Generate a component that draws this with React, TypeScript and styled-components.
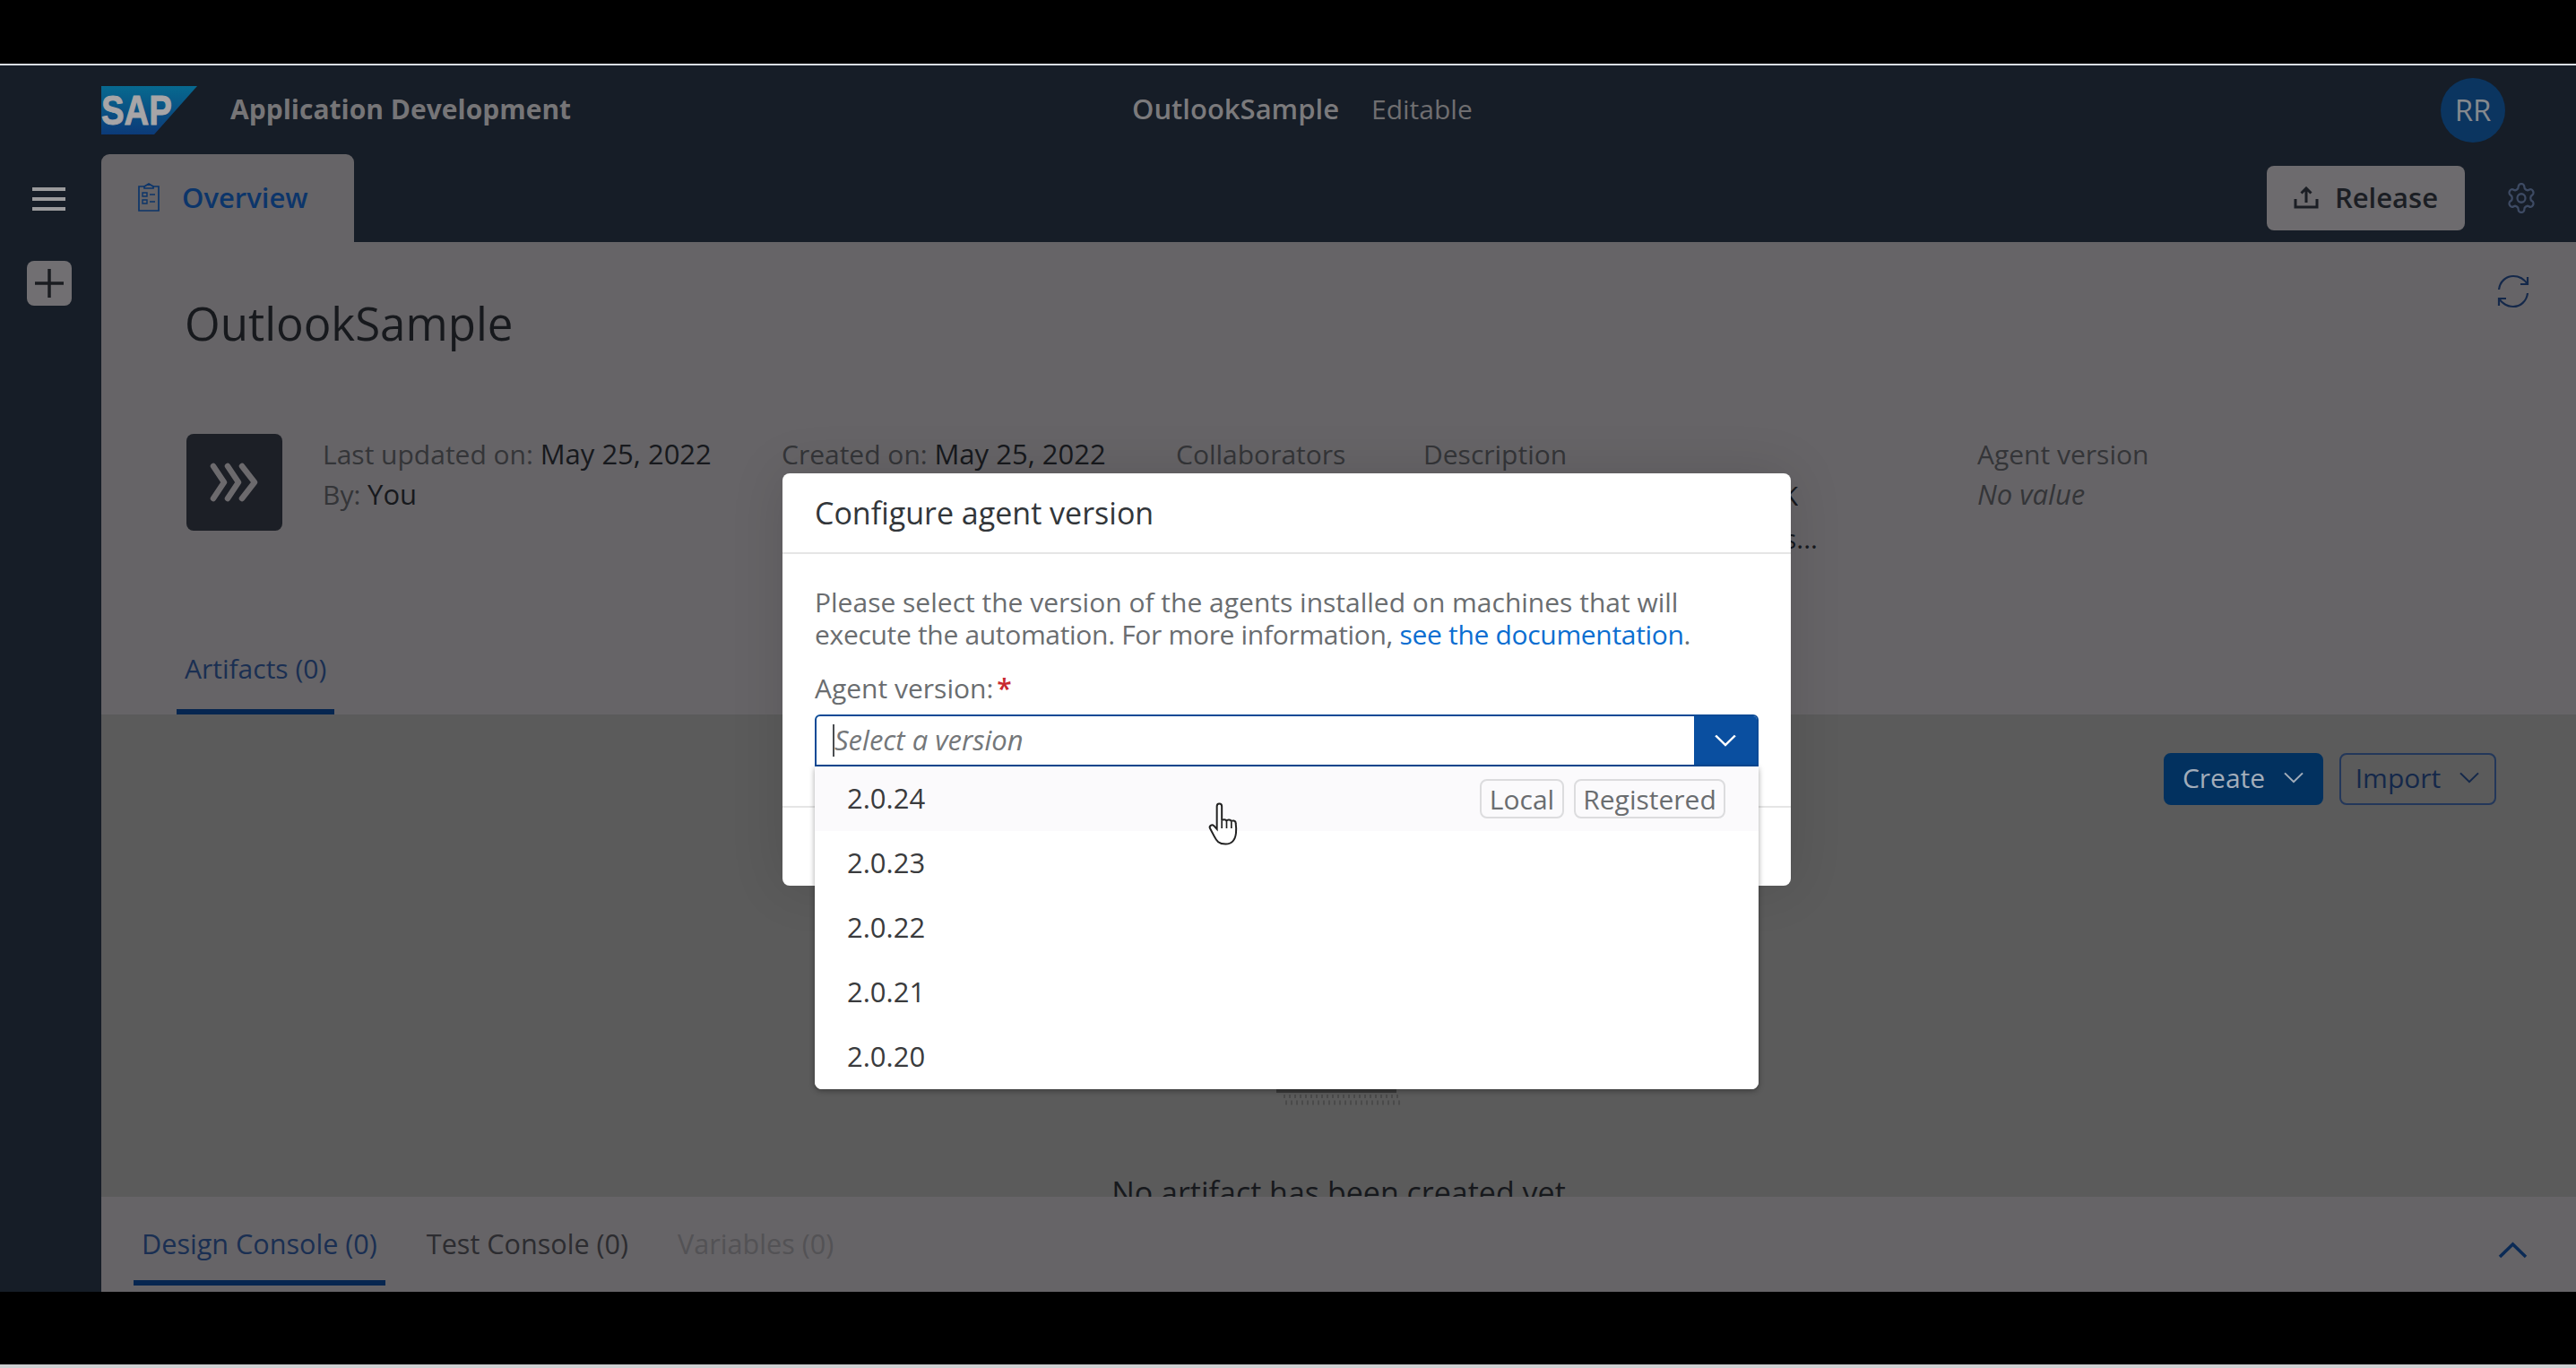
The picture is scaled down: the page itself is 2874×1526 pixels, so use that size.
import React from "react";
import styled, { createGlobalStyle } from "styled-components";

const Global = createGlobalStyle`
  html, body { margin: 0; padding: 0; background: #000; }
  * { box-sizing: border-box; }
  body { font-family: "Open Sans", "Noto Sans", "Liberation Sans", sans-serif; font-stretch: 88%; }
`;

const Shell = styled.div`
  position: relative; width: 2874px; height: 1526px; overflow: hidden;
  display: flex; flex-direction: column; background: #000;
`;
const Letterbox = styled.div<{ $h: number }>` height: ${p => p.$h}px; background: #000; flex: none; `;
const TopRule = styled.div` height: 2px; background: #d9dde2; flex: none; `;
const BottomRule = styled.div` height: 4px; background: #cfd0d2; flex: none; `;
const Workspace = styled.div` height: 1368px; flex: none; display: flex; background: #161d27; `;
const Sidebar = styled.nav`
  width: 113px; flex: none; display: flex; flex-direction: column; align-items: center;
  padding: 136px 4px 0 0; gap: 56px;
`;
const Burger = styled.div`
  width: 37px; height: 26px; display: flex; flex-direction: column; justify-content: space-between;
  span { display: block; height: 4px; background: #9a9a9c; }
`;
const AddButton = styled.div`
  width: 50px; height: 50px; border-radius: 8px; background: #716f72;
  display: flex; align-items: center; justify-content: center;
`;
const Main = styled.div` flex: 1; min-width: 0; display: flex; flex-direction: column; `;
const ShellBar = styled.header` height: 99px; flex: none; display: flex; align-items: center; padding-right: 79px; `;
const Brand = styled.div` width: 1150px; flex: none; display: flex; align-items: center; gap: 37px; `;
const AppName = styled.div` font-size: 30px; font-weight: 700; color: #767577; white-space: nowrap; margin-bottom: 3px; `;
const ProjectName = styled.div` font-size: 31px; font-weight: 600; color: #7b7a7c; white-space: nowrap; margin-bottom: 3px; `;
const ProjectState = styled.div` font-size: 30px; color: #6f6e70; margin: 0 0 3px 36px; white-space: nowrap; `;
const Avatar = styled.div`
  margin-left: auto; width: 72px; height: 72px; border-radius: 50%; background: #0b3560; color: #85898e;
  font-size: 33px; display: flex; align-items: center; justify-content: center;
`;
const TabRow = styled.div` height: 98px; flex: none; display: flex; align-items: center; padding-right: 43px; `;
const OverviewTab = styled.div`
  width: 282px; height: 98px; background: #666467; border-radius: 9px 9px 0 0; display: flex; align-items: center;
  padding: 0 0 2px 41px; gap: 25px; font-size: 31px; font-weight: 600; color: #0c356a;
`;
const ReleaseButton = styled.div`
  margin-left: auto; width: 221px; height: 72px; border-radius: 8px; background: #6d6b6e; color: #1b1e24;
  font-size: 31px; font-weight: 600; display: flex; align-items: center; justify-content: center; gap: 18px; padding-bottom: 2px;
`;
const GearWrap = styled.div` margin-left: 45px; width: 36px; height: 38px; display: flex; `;
const Content = styled.main` flex: 1; min-height: 0; display: flex; flex-direction: column; background: #666467; `;
const PageHead = styled.section`
  height: 527px; flex: none; display: flex; flex-direction: column; padding: 36px 52px 0 84px; overflow: hidden;
`;
const TitleRow = styled.div` height: 84px; flex: none; display: flex; justify-content: space-between; padding-left: 9px; `;
const Title = styled.h1`
  margin: 26px 0 0; font-size: 51px; line-height: 56px; font-weight: 400; color: #17191d;
`;
const MetaRow = styled.div`
  margin-top: 94px; padding-left: 11px; display: grid;
  grid-template-columns: 152px 512px 440px 276px 618px auto; font-size: 30px; line-height: 45px; white-space: nowrap;
`;
const ProjectTile = styled.div`
  width: 107px; height: 108px; border-radius: 8px; background: #1c1f26; display: flex; align-items: center; justify-content: center;
`;
const MetaLabel = styled.span` color: #343538; `;
const MetaValue = styled.span` color: #17191d; font-size: 31px; `;
const MetaEmpty = styled.div` color: #343538; font-style: italic; font-size: 31px; `;
const ClippedLine = styled.div<{ $w: number }>` width: ${p => p.$w}px; text-align: right; color: #17191d; line-height: 48px; overflow: hidden; `;
const PageTabs = styled.div` margin-top: auto; display: flex; `;
const TabItem = styled.div<{ $active?: boolean; $muted?: boolean }>`
  height: 99px; margin-right: 37px; padding: 30px 9px 0; font-size: 30.6px; line-height: 44px; white-space: nowrap;
  color: ${p => p.$active ? "#1a2f52" : p.$muted ? "#535255" : "#2c2c30"};
  border-bottom: 6px solid ${p => p.$active ? "#062650" : "transparent"};
`;
const PageTab = styled(TabItem)` height: auto; padding-top: 0; padding-bottom: 23px; font-size: 30px; `;
const ArtifactArea = styled.section`
  height: 538px; flex: none; background: #5b5b5b; overflow: hidden; display: flex; flex-direction: column; align-items: center;
  padding-top: 43px;
`;
const Toolbar = styled.div` align-self: flex-end; display: flex; gap: 18px; padding-right: 89px; `;
const MenuButton = styled.div<{ $primary?: boolean }>`
  height: 58px; width: ${p => p.$primary ? 178 : 175}px; border-radius: 8px; font-size: 30px; display: flex; align-items: center;
  justify-content: center; gap: 20px; padding-bottom: 3px;
  color: ${p => p.$primary ? "#a2adba" : "#14284a"};
  background: ${p => p.$primary ? "#02315f" : "transparent"};
  border: 2px solid ${p => p.$primary ? "#02315f" : "#23375a"};
`;
const Illustration = styled.svg` margin-top: 317px; flex: none; `;
const EmptyText = styled.div` margin-top: 77px; font-size: 34px; line-height: 40px; color: #17191d; white-space: nowrap; `;
const BottomBar = styled.section`
  flex: 1; min-height: 0; display: flex; justify-content: space-between; padding: 0 54px 0 36px;
`;
const BottomTabs = styled.div` display: flex; align-items: flex-start; `;
const Collapse = styled.svg` margin-top: 50px; flex: none; `;

const Dialog = styled.div`
  position: absolute; left: 873px; top: 528px; width: 1125px; height: 460px; border-radius: 8px; background: #fff;
  display: flex; flex-direction: column; box-shadow: 0 0 60px rgba(0,0,0,.12);
`;
const DialogHeader = styled.div`
  height: 90px; flex: none; display: flex; align-items: center; padding: 0 36px; border-bottom: 2px solid #e5e5e5;
  font-size: 34px; color: #32363a;
`;
const DialogBody = styled.div` flex: 1; padding: 36px 36px 0; `;
const DialogFooter = styled.div` height: 89px; flex: none; border-top: 2px solid #e5e5e5; `;
const Description = styled.p` margin: 0; font-size: 30px; line-height: 36px; color: #6a6d70; white-space: nowrap; `;
const TightLine = styled.span` letter-spacing: -0.32px; `;
const DocLink = styled.a` color: #0a6ed1; `;
const FieldLabel = styled.div` margin-top: 24px; font-size: 30px; line-height: 36px; color: #6a6d70; `;
const Required = styled.span` color: #c8282f; font-weight: 600; margin-left: 4px; `;
const Combo = styled.div`
  margin-top: 11px; height: 58px; display: flex; border: 2px solid #0a4a96; border-radius: 6px 6px 0 0; overflow: hidden;
`;
const ComboInput = styled.div`
  flex: 1; display: flex; align-items: center; padding: 0 0 3px 18px; font-size: 31px; font-style: italic; color: #74777a;
  &::before { content: ""; width: 2px; height: 36px; background: #4a4d50; margin-top: 3px; }
`;
const ComboButton = styled.div` width: 70px; flex: none; background: #0a4fa0; display: flex; align-items: center; justify-content: center; `;
const Dropdown = styled.div`
  position: absolute; left: 36px; top: 327px; width: 1053px; height: 360px; background: #fff; border-radius: 0 0 8px 8px;
  box-shadow: 0 2px 6px rgba(0,0,0,.35); overflow: hidden;
`;
const OptionRow = styled.div<{ $hover?: boolean }>`
  height: 72px; display: flex; align-items: center; justify-content: space-between; padding: 0 37px 0 36px;
  font-size: 31px; color: #3a3b3d; background: ${p => p.$hover ? "#fbfafc" : "#fff"};
`;
const OptionLabel = styled.span` margin-bottom: 3px; `;
const TagGroup = styled.div` display: flex; gap: 11px; `;
const Tag = styled.div<{ $w: number }>`
  width: ${p => p.$w}px; height: 44px; display: flex; align-items: center; justify-content: center; border: 2px solid #dcdcde;
  border-radius: 8px; font-size: 30px; color: #6a6d70;
`;
const Cursor = styled.svg` position: absolute; left: 1347px; top: 894px; `;

const Chevron = ({ w, h, color, up, sw = 3 }: { w: number; h: number; color: string; up?: boolean; sw?: number }) => (
  <svg width={w} height={h} viewBox="0 0 24 14" fill="none" preserveAspectRatio="none">
    <path d={up ? "M2 12.5 12 2l10 10.5" : "M2 1.5 12 12 22 1.5"} stroke={color} strokeWidth={sw} />
  </svg>
);

const versions = ["2.0.24", "2.0.23", "2.0.22", "2.0.21", "2.0.20"];

export default function App() {
  return (
    <Shell>
      <Global />
      <Letterbox $h={71} />
      <TopRule />
      <Workspace>
        <Sidebar>
          <Burger><span /><span /><span /></Burger>
          <AddButton>
            <svg width="34" height="34" viewBox="0 0 34 34"><path d="M17 1v32M1 17h32" stroke="#1a1c20" strokeWidth="3.500" /></svg>
          </AddButton>
        </Sidebar>
        <Main>
          <ShellBar>
            <Brand>
              <svg width="107" height="54" viewBox="0 0 107 54">
                <defs>
                  <linearGradient id="sapg" x1="0" y1="0" x2="0" y2="1">
                    <stop offset="0" stopColor="#07698f" />
                    <stop offset="1" stopColor="#0c3a78" />
                  </linearGradient>
                </defs>
                <polygon points="0,0 107,0 59,54 0,54" fill="url(#sapg)" />
                <text x="0" y="43" fontFamily="Liberation Sans" fontWeight="700" fontSize="46" fill="#a7a5a7" stroke="#a7a5a7" strokeWidth="1" textLength="79" lengthAdjust="spacingAndGlyphs">SAP</text>
              </svg>
              <AppName>Application Development</AppName>
            </Brand>
            <ProjectName>OutlookSample</ProjectName>
            <ProjectState>Editable</ProjectState>
            <Avatar>RR</Avatar>
          </ShellBar>
          <TabRow>
            <OverviewTab>
              <svg width="24" height="32" viewBox="0 0 24 32" fill="none" stroke="#0c356a" strokeWidth="1.7">
                <path d="M7 4H1v27h22V4h-6" />
                <path d="M7 6V4l5-3 5 3v2z" />
                <path d="M5 11h5v4H5zM5 19h5v4H5zM13 13h6M13 21h6" strokeWidth="1.4" />
              </svg>
              Overview
            </OverviewTab>
            <ReleaseButton>
              <svg width="28" height="25" viewBox="0 0 28 25" fill="none" stroke="#1b1e24" strokeWidth="3">
                <path d="M14 18V2M8.500 7.500 14 2l5.500 5.500" />
                <path d="M2 14v9h24v-9" />
              </svg>
              Release
            </ReleaseButton>
            <GearWrap>
              <svg width="36" height="38" viewBox="0 0 24 24" fill="none" stroke="#3d4a63" strokeWidth="1.500" preserveAspectRatio="none">
                <path d="M12.220 2h-.44a2 2 0 0 0-2 2v.18a2 2 0 0 1-1 1.730l-.43.25a2 2 0 0 1-2 0l-.15-.08a2 2 0 0 0-2.730.73l-.22.38a2 2 0 0 0 .73 2.730l.15.1a2 2 0 0 1 1 1.720v.51a2 2 0 0 1-1 1.740l-.15.09a2 2 0 0 0-.73 2.730l.22.38a2 2 0 0 0 2.730.73l.15-.08a2 2 0 0 1 2 0l.43.25a2 2 0 0 1 1 1.730V20a2 2 0 0 0 2 2h.44a2 2 0 0 0 2-2v-.18a2 2 0 0 1 1-1.730l.43-.25a2 2 0 0 1 2 0l.15.08a2 2 0 0 0 2.730-.73l.22-.39a2 2 0 0 0-.73-2.730l-.15-.08a2 2 0 0 1-1-1.740v-.5a2 2 0 0 1 1-1.740l.15-.09a2 2 0 0 0 .73-2.730l-.22-.38a2 2 0 0 0-2.730-.73l-.15.08a2 2 0 0 1-2 0l-.43-.25a2 2 0 0 1-1-1.730V4a2 2 0 0 0-2-2z" />
                <circle cx="12" cy="12" r="3" />
              </svg>
            </GearWrap>
          </TabRow>
          <Content>
            <PageHead>
              <TitleRow>
                <Title>OutlookSample</Title>
                <svg width="36" height="38" viewBox="0 0 36 38" fill="none" stroke="#14284a" strokeWidth="2.200">
                  <path d="M2 17C3 8 10 2 18 2c7 0 12 3 16 9M34 3v8h-8" />
                  <path d="M34 21c-1 9-8 15-16 15-7 0-12-3-16-9M2 35v-8h8" />
                </svg>
              </TitleRow>
              <MetaRow>
                <ProjectTile>
                  <svg width="56" height="44" viewBox="0 0 56 44" fill="none" stroke="#6c6a6d" strokeWidth="6.500" strokeLinecap="round" strokeLinejoin="round">
                    <path d="M4 4l12 18L4 40M20 4l12 18-12 18M36 4l14 18-14 18" />
                  </svg>
                </ProjectTile>
                <div>
                  <div><MetaLabel>Last updated on: </MetaLabel><MetaValue>May 25, 2022</MetaValue></div>
                  <div><MetaLabel>By: </MetaLabel><MetaValue>You</MetaValue></div>
                </div>
                <div><MetaLabel>Created on: </MetaLabel><MetaValue>May 25, 2022</MetaValue></div>
                <MetaLabel>Collaborators</MetaLabel>
                <div>
                  <MetaLabel>Description</MetaLabel>
                  <ClippedLine $w={418}>K</ClippedLine>
                  <ClippedLine $w={440}>s...</ClippedLine>
                </div>
                <div>
                  <MetaLabel>Agent version</MetaLabel>
                  <MetaEmpty>No value</MetaEmpty>
                </div>
              </MetaRow>
              <PageTabs>
                <PageTab $active>Artifacts (0)</PageTab>
              </PageTabs>
            </PageHead>
            <ArtifactArea>
              <Toolbar>
                <MenuButton $primary>Create <Chevron w={24} h={13} color="#a2adba" sw={2} /></MenuButton>
                <MenuButton>Import <Chevron w={24} h={13} color="#14284a" sw={2} /></MenuButton>
              </Toolbar>
              <Illustration width="140" height="18" viewBox="0 0 140 18">
                <rect x="0" y="0" width="134" height="4" fill="#3a3a3a" />
                <path d="M8 8h130" stroke="#4a4a4a" strokeWidth="4" strokeDasharray="2 4" fill="none" />
                <path d="M10 15h130" stroke="#4a4a4a" strokeWidth="5" strokeDasharray="2 4" fill="none" />
              </Illustration>
              <EmptyText>No artifact has been created yet</EmptyText>
            </ArtifactArea>
            <BottomBar>
              <BottomTabs>
                <TabItem $active>Design Console (0)</TabItem>
                <TabItem>Test Console (0)</TabItem>
                <TabItem $muted>Variables (0)</TabItem>
              </BottomTabs>
              <Collapse width="33" height="19" viewBox="0 0 33 19" fill="none">
                <path d="M2 17 16.500 3 31 17" stroke="#0b2a55" strokeWidth="3.500" />
              </Collapse>
            </BottomBar>
          </Content>
        </Main>
      </Workspace>
      <Letterbox $h={81} />
      <BottomRule />

      <Dialog>
        <DialogHeader>Configure agent version</DialogHeader>
        <DialogBody>
          <Description>
            Please select the version of the agents installed on machines that will<br />
            <TightLine>execute the automation. For more information, <DocLink>see the documentation</DocLink>.</TightLine>
          </Description>
          <FieldLabel>Agent version:<Required>*</Required></FieldLabel>
          <Combo>
            <ComboInput>Select a version</ComboInput>
            <ComboButton><Chevron w={26} h={14} color="#fff" sw={2.400} /></ComboButton>
          </Combo>
        </DialogBody>
        <DialogFooter />
        <Dropdown>
          {versions.map((v, i) => (
            <OptionRow key={v} $hover={i === 0}>
              <OptionLabel>{v}</OptionLabel>
              {i === 0 && (
                <TagGroup>
                  <Tag $w={94}>Local</Tag>
                  <Tag $w={169}>Registered</Tag>
                </TagGroup>
              )}
            </OptionRow>
          ))}
        </Dropdown>
      </Dialog>

      <Cursor width="40" height="50" viewBox="0 0 24 30">
        <path
          d="M8 1.500c1 0 1.700.7 1.700 1.800V13c0-1.200 3-1.300 3.200.2 0-1.200 3-1.200 3.200.3.2-1 2.900-.8 2.900 1 0 0 .5 3.800.2 6.500-.3 3-1.600 7.500-7 7.500-4.500 0-6-2-7.500-5L1.800 18c-.8-1.500 1.200-3 2.600-1.700l2 2.200V3.300C6.400 2.200 7 1.500 8 1.500z"
          fill="#fff" stroke="#222" strokeWidth="1.200"
        />
        <path d="M9.700 13v5M12.900 13.200V18M16.100 13.500V18" stroke="#222" strokeWidth="1" fill="none" />
      </Cursor>
    </Shell>
  );
}
